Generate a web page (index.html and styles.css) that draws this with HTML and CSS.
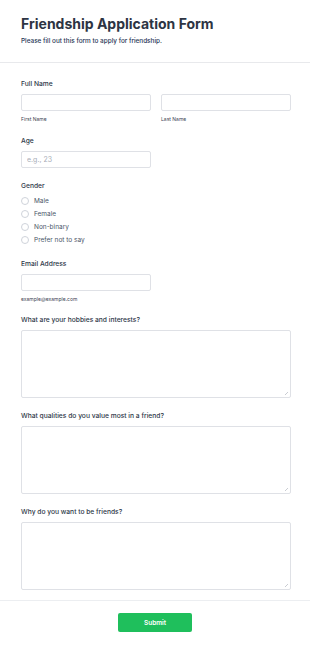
FILE: index.html
```html
<!DOCTYPE html>
<html lang="en">

<head>
    <meta charset="UTF-8">
    <meta name="viewport" content="width=device-width, initial-scale=1.0">
    <title>Friendship Application Form</title>
    <link rel="stylesheet" href="styles.css">
</head>

<body>
    <form class="form" action="#">
        <div class="form-header">
            <h1>Friendship Application Form</h1>
            <p class="subtitle">Please fill out this form to apply for friendship.</p>
        </div>

        <div class="form-body">
            <div class="field">
                <label class="label">Full Name</label>
                <div class="name-row">
                    <div class="name-col">
                        <input type="text" class="input">
                        <span class="hint">First Name</span>
                    </div>
                    <div class="name-col">
                        <input type="text" class="input">
                        <span class="hint">Last Name</span>
                    </div>
                </div>
            </div>

            <div class="field">
                <label class="label">Age</label>
                <input type="text" class="input half" placeholder="e.g., 23">
            </div>

            <div class="field">
                <label class="label tight">Gender</label>
                <div class="radios">
                    <label class="radio"><span class="dot"></span>Male</label>
                    <label class="radio"><span class="dot"></span>Female</label>
                    <label class="radio"><span class="dot"></span>Non-binary</label>
                    <label class="radio"><span class="dot"></span>Prefer not to say</label>
                </div>
            </div>

            <div class="field">
                <label class="label">Email Address</label>
                <input type="email" class="input half">
                <span class="hint email-hint">example@example.com</span>
            </div>

            <div class="field">
                <label class="label">What are your hobbies and interests?</label>
                <div class="textarea-wrap"><textarea class="textarea"></textarea></div>
            </div>

            <div class="field">
                <label class="label">What qualities do you value most in a friend?</label>
                <div class="textarea-wrap"><textarea class="textarea"></textarea></div>
            </div>

            <div class="field">
                <label class="label">Why do you want to be friends?</label>
                <div class="textarea-wrap"><textarea class="textarea"></textarea></div>
            </div>
        </div>

        <div class="form-footer">
            <button type="button" class="submit">Submit</button>
        </div>
    </form>
</body>

</html>
```

FILE: styles.css
```css
* {
    margin: 0;
    padding: 0;
    box-sizing: border-box;
    font-family: Inter, 'Noto Sans', sans-serif;
}

body {
    background-color: #ffffff;
    color: #2d3748;
}

.form-header {
    padding: 15px 21px 16px;
    border-bottom: 1px solid #e8e9ec;
}

.form-header h1 {
    font-size: 14px;
    line-height: 18px;
    font-weight: 700;
    color: #2d3443;
}

.subtitle {
    font-size: 6.4px;
    line-height: 9px;
    margin-top: 4px;
    font-weight: 500;
    color: #1f3555;
}

.form-body {
    padding: 17px 19px 10px 21px;
    display: flex;
    flex-direction: column;
    gap: 14px;
    border-bottom: 1px solid #eceef1;
}

.field {
    display: flex;
    flex-direction: column;
    align-items: flex-start;
}

.label {
    font-size: 6.7px;
    line-height: 9px;
    font-weight: 500;
    color: #2d3748;
    margin-bottom: 5px;
}

.label.tight {
    margin-bottom: 3px;
}

.name-row {
    display: flex;
    gap: 10px;
    width: 100%;
}

.name-col {
    flex: 1;
    display: flex;
    flex-direction: column;
}

.input {
    width: 100%;
    height: 17px;
    border: 1px solid #dfe1e6;
    border-radius: 2px;
    padding: 0 5px;
    font-size: 7px;
    background: #ffffff;
}

.input.half {
    width: 130px;
}

.input::placeholder {
    color: #a8adb7;
}

.hint {
    font-size: 5px;
    line-height: 7px;
    margin-top: 5px;
    color: #3c4453;
}

.email-hint {
    margin-bottom: -1px;
}

.radios {
    display: flex;
    flex-direction: column;
}

.radio {
    display: flex;
    align-items: center;
    height: 13px;
    font-size: 6.5px;
    color: #4a5568;
}

.dot {
    width: 8px;
    height: 8px;
    border: 1px solid #cfd3da;
    border-radius: 50%;
    margin-right: 5px;
}

.textarea-wrap {
    position: relative;
    width: 100%;
}

.textarea-wrap::after {
    content: "";
    position: absolute;
    right: 3px;
    bottom: 3px;
    width: 3px;
    height: 3px;
    background: linear-gradient(135deg, transparent 45%, #c9ccd2 45%, #c9ccd2 60%, transparent 60%);
}

.textarea {
    display: block;
    width: 100%;
    height: 68px;
    border: 1px solid #dfe1e6;
    border-radius: 2px;
    resize: none;
}

.form-footer {
    padding: 12px 0 20px;
    display: flex;
    justify-content: center;
}

.submit {
    width: 74px;
    height: 19px;
    border: none;
    border-radius: 2px;
    background-color: #1fbf5c;
    color: #ffffff;
    font-size: 6.5px;
    font-weight: 600;
    cursor: pointer;
}
```
